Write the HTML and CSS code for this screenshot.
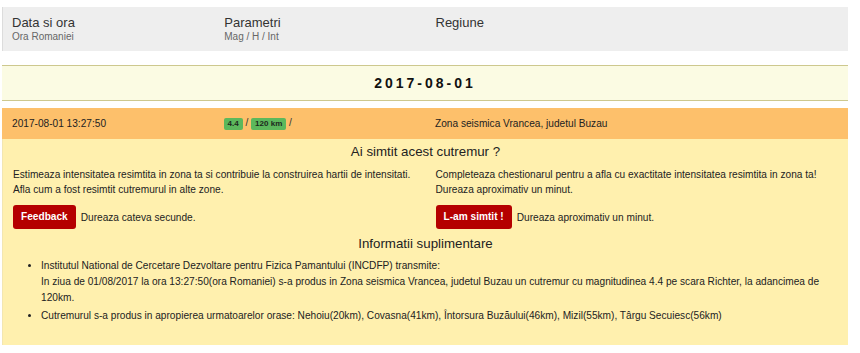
FILE: index.html
```html
<!DOCTYPE html>
<html lang="ro">
<head>
<meta charset="utf-8">
<link rel="stylesheet" href="styles.css">
</head>
<body>
<div class="page">
  <div class="head">
    <div class="hcol"><div class="ht">Data si ora</div><div class="hs">Ora Romaniei</div></div>
    <div class="hcol"><div class="ht">Parametri</div><div class="hs">Mag / H / Int</div></div>
    <div class="hcol wide"><div class="ht">Regiune</div></div>
  </div>
  <div class="datebar">2017-08-01</div>
  <div class="event">
    <div class="ecol">2017-08-01 13:27:50</div>
    <div class="ecol"><span class="badge">4.4</span> <span class="sl">/</span> <span class="badge">120 km</span> <span class="sl">/</span></div>
    <div class="ecol wide">Zona seismica Vrancea, judetul Buzau</div>
  </div>
  <div class="panel">
    <h3 class="ptitle">Ai simtit acest cutremur ?</h3>
    <div class="cols">
      <div class="pcol">
        <p class="txt">Estimeaza intensitatea resimtita in zona ta si contribuie la construirea hartii de intensitati.<br>Afla cum a fost resimtit cutremurul in alte zone.</p>
        <div class="act"><span class="btn">Feedback</span> <span>Dureaza cateva secunde.</span></div>
      </div>
      <div class="pcol">
        <p class="txt">Completeaza chestionarul pentru a afla cu exactitate intensitatea resimtita in zona ta!<br>Dureaza aproximativ un minut.</p>
        <div class="act"><span class="btn">L-am simtit !</span> <span>Dureaza aproximativ un minut.</span></div>
      </div>
    </div>
    <h3 class="ptitle info">Informatii suplimentare</h3>
    <ul class="list">
      <li>Institutul National de Cercetare Dezvoltare pentru Fizica Pamantului (INCDFP) transmite:<br>In ziua de 01/08/2017 la ora 13:27:50(ora Romaniei) s-a produs in Zona seismica Vrancea, judetul Buzau un cutremur cu magnitudinea 4.4 pe scara Richter, la adancimea de 120km.</li>
      <li>Cutremurul s-a produs in apropierea urmatoarelor orase: Nehoiu(20km), Covasna(41km), Întorsura Buzăului(46km), Mizil(55km), Târgu Secuiesc(56km)</li>
    </ul>
  </div>
</div>
</body>
</html>
```
FILE: styles.css
```css
html, body { margin: 0; padding: 0; background: #fff; }
body { font-family: "Liberation Sans", Arial, sans-serif; color: #222; font-size: 10.15px; }
.page { width: 846px; margin: 0 0 0 2px; padding-top: 7px; }
.head { display: grid; grid-template-columns: 25% 25% 50%; background: #eeeeee; border-left: 1px solid #dcdcdc; height: 44px; box-sizing: border-box; }
.hcol { padding: 8px 10px 0 10px; }
.head .hcol:first-child { padding-left: 9px; }
.ht { font-size: 13px; color: #333; line-height: 16px; }
.hs { font-size: 10px; color: #666; line-height: 12px; }
.datebar { margin-top: 14px; background: #fbfbe3; border-top: 1px solid #cdc88e; border-bottom: 1px solid #cdc88e; height: 34px; line-height: 34px; text-align: center; font-weight: bold; font-size: 14px; letter-spacing: 3px; color: #111; }
.event { margin-top: 7px; display: grid; grid-template-columns: 25% 25% 50%; background: #fdc06b; height: 31px; align-items: center; }
.ecol { padding: 0 10px; font-size: 10.15px; color: #222; }
.badge { display: inline-block; background: #5cb85c; color: #1d2a1d; font-size: 8px; font-weight: bold; padding: 2px 4px; border-radius: 2px; line-height: 8px; vertical-align: 0; }
.sl { color: #333; }
.panel { background: #fff0ae; border-left: 1px solid #f3e6b0; padding: 4px 0 19px; }
.ptitle { margin: 0; text-align: center; font-weight: normal; font-size: 13.3px; color: #222; line-height: 18px; }
.cols { display: grid; grid-template-columns: 50% 50%; margin-top: 6px; }
.pcol { padding: 0 10px; }
.txt { margin: 0; line-height: 15px; }
.act { margin-top: 8px; display: flex; align-items: center; gap: 5px; }
.btn { display: inline-block; background: #b50000; color: #fff; font-weight: bold; padding: 0 8px; height: 24px; line-height: 24px; border-radius: 3px; }
.info { margin-top: 6px; }
.list { margin: 5px 0 0; padding-left: 38px; line-height: 16px; }
.list li { margin-bottom: 2px; }
```
